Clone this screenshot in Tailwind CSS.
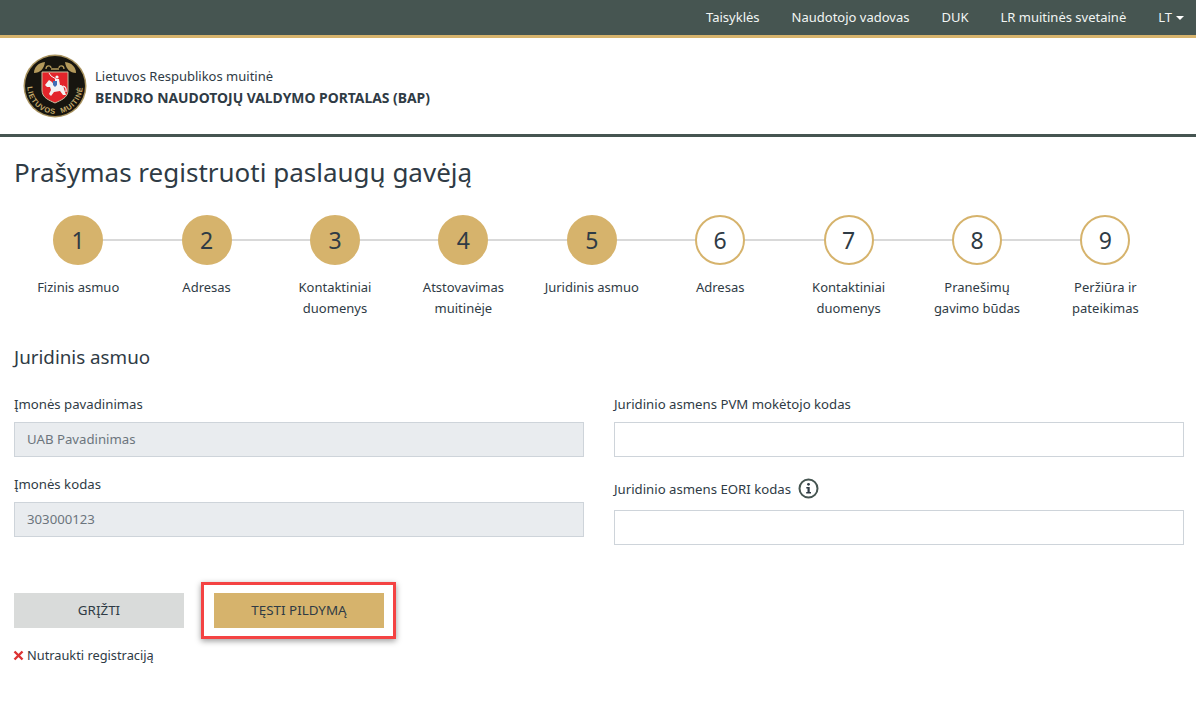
<!DOCTYPE html>
<html>
<head>
  <meta charset="UTF-8" />
  <meta name="viewport" content="width=device-width, initial-scale=1.0" />
  <script src="https://cdn.jsdelivr.net/npm/@tailwindcss/browser@4"></script>
</head>
<body class="bg-white text-[#2f3b45] font-['Noto_Sans','Open_Sans',sans-serif] text-[13px]">
  <nav class="h-[38px] bg-[#465551] border-b-[3px] border-[#d6b36c] flex items-center justify-end text-[#f2f5f4] pr-[12px] gap-[32px]">
    <a>Taisyklės</a>
    <a>Naudotojo vadovas</a>
    <a>DUK</a>
    <a>LR muitinės svetainė</a>
    <a class="flex items-center gap-[4px]">LT <span class="w-0 h-0 border-x-[4px] border-x-transparent border-t-[4px] border-t-white"></span></a>
  </nav>

  <header class="h-[99px] border-b-[3px] border-[#465551] flex items-center pl-[23px] gap-[8px]">
    <svg class="w-[64px] h-[64px] shrink-0" viewBox="0 0 64 64">
      <circle cx="32" cy="32" r="31.5" fill="#a9935f" />
      <circle cx="32" cy="32" r="30" fill="#17150f" />
      <path d="M22 8 C15 9 11 13 11 19 C17 19 21 15 22 8Z" fill="#b49a5c" />
      <path d="M42 8 C49 9 53 13 53 19 C47 19 43 15 42 8Z" fill="#b49a5c" />
      <path d="M23 15 C23 11 28 11 28 14 M41 15 C41 11 36 11 36 14 M28 15 H36" fill="none" stroke="#b49a5c" stroke-width="1.3" />
      <path d="M19 18 H45 V36 C45 44 38 46 32 49 C26 46 19 44 19 36Z" fill="#e3252b" stroke="#c9c0a0" stroke-width="1" />
      <path d="M22 31 L26 26 L29 28 L31 31 L38 31 Q41 32 41 35 L43 41 L40 41 L37 37 L31 38 L28 42 L26 40 L28 36 L27 33 L24 33Z" fill="#f3f3f3" />
      <path d="M40 32 Q44 33 43 38" fill="none" stroke="#f3f3f3" stroke-width="1.2" />
      <circle cx="34" cy="23" r="1.6" fill="#f3f3f3" />
      <path d="M32 25 H36 L37 31 H32Z" fill="#f3f3f3" />
      <path d="M33 25 L28 22 L26 19" fill="none" stroke="#f3f3f3" stroke-width="1" />
      <path d="M30 27 H34 V31 L32 33 L30 31Z" fill="#3f6fb5" />
      <defs>
        <path id="logoArc" d="M5.5 24 A27.7 27.7 0 1 0 58.5 24" />
      </defs>
      <text class="font-['Liberation_Sans',sans-serif] tracking-[0.8px] [word-spacing:3px]" font-size="7.4" font-weight="700" fill="#c5ab6b"><textPath href="#logoArc" startOffset="50%" text-anchor="middle">LIETUVOS MUITINĖ</textPath></text>
    </svg>
    <div class="leading-[21px] pt-px">
      <div>Lietuvos Respublikos muitinė</div>
      <div class="font-bold text-[13.9px]">BENDRO NAUDOTOJŲ VALDYMO PORTALAS (BAP)</div>
    </div>
  </header>

  <main class="px-[14px]">
    <h1 class="text-[26px] leading-[36px] mt-[17px]">Prašymas registruoti paslaugų gavėją</h1>

    <ol class="w-[1155.6px] grid grid-cols-9 mt-[25px] text-center leading-[21px]">
      <li class="relative">
        <div class="absolute left-1/2 top-[24px] w-full h-[2px] bg-[#d9d9d9]"></div>
        <div class="relative mx-auto w-[50px] h-[50px] rounded-full bg-[#d6b36c] border-2 border-[#d6b36c] flex items-center justify-center text-[23px]">1</div>
        <div class="mt-[12px]">Fizinis asmuo</div>
      </li>
      <li class="relative">
        <div class="absolute left-1/2 top-[24px] w-full h-[2px] bg-[#d9d9d9]"></div>
        <div class="relative mx-auto w-[50px] h-[50px] rounded-full bg-[#d6b36c] border-2 border-[#d6b36c] flex items-center justify-center text-[23px]">2</div>
        <div class="mt-[12px]">Adresas</div>
      </li>
      <li class="relative">
        <div class="absolute left-1/2 top-[24px] w-full h-[2px] bg-[#d9d9d9]"></div>
        <div class="relative mx-auto w-[50px] h-[50px] rounded-full bg-[#d6b36c] border-2 border-[#d6b36c] flex items-center justify-center text-[23px]">3</div>
        <div class="mt-[12px]">Kontaktiniai<br />duomenys</div>
      </li>
      <li class="relative">
        <div class="absolute left-1/2 top-[24px] w-full h-[2px] bg-[#d9d9d9]"></div>
        <div class="relative mx-auto w-[50px] h-[50px] rounded-full bg-[#d6b36c] border-2 border-[#d6b36c] flex items-center justify-center text-[23px]">4</div>
        <div class="mt-[12px]">Atstovavimas<br />muitinėje</div>
      </li>
      <li class="relative">
        <div class="absolute left-1/2 top-[24px] w-full h-[2px] bg-[#d9d9d9]"></div>
        <div class="relative mx-auto w-[50px] h-[50px] rounded-full bg-[#d6b36c] border-2 border-[#d6b36c] flex items-center justify-center text-[23px]">5</div>
        <div class="mt-[12px]">Juridinis asmuo</div>
      </li>
      <li class="relative">
        <div class="absolute left-1/2 top-[24px] w-full h-[2px] bg-[#d9d9d9]"></div>
        <div class="relative mx-auto w-[50px] h-[50px] rounded-full bg-white border-2 border-[#d6b36c] flex items-center justify-center text-[23px]">6</div>
        <div class="mt-[12px]">Adresas</div>
      </li>
      <li class="relative">
        <div class="absolute left-1/2 top-[24px] w-full h-[2px] bg-[#d9d9d9]"></div>
        <div class="relative mx-auto w-[50px] h-[50px] rounded-full bg-white border-2 border-[#d6b36c] flex items-center justify-center text-[23px]">7</div>
        <div class="mt-[12px]">Kontaktiniai<br />duomenys</div>
      </li>
      <li class="relative">
        <div class="absolute left-1/2 top-[24px] w-full h-[2px] bg-[#d9d9d9]"></div>
        <div class="relative mx-auto w-[50px] h-[50px] rounded-full bg-white border-2 border-[#d6b36c] flex items-center justify-center text-[23px]">8</div>
        <div class="mt-[12px]">Pranešimų<br />gavimo būdas</div>
      </li>
      <li class="relative">
        <div class="relative mx-auto w-[50px] h-[50px] rounded-full bg-white border-2 border-[#d6b36c] flex items-center justify-center text-[23px]">9</div>
        <div class="mt-[12px]">Peržiūra ir<br />pateikimas</div>
      </li>
    </ol>

    <h2 class="text-[18.8px] leading-[26px] mt-[25px]">Juridinis asmuo</h2>

    <div class="grid grid-cols-2 gap-x-[30px] w-[1170px] mt-[24px] text-[13.2px]">
      <div>
        <label class="block leading-[20px]">Įmonės pavadinimas</label>
        <div class="mt-[8px] h-[35px] bg-[#e9ecef] border border-[#ced4da] flex items-center px-[12px] pt-px text-[#6c757d]">UAB Pavadinimas</div>
        <label class="block leading-[20px] mt-[17px]">Įmonės kodas</label>
        <div class="mt-[8px] h-[35px] bg-[#e9ecef] border border-[#ced4da] flex items-center px-[12px] pt-px text-[#6c757d]">303000123</div>
      </div>
      <div>
        <label class="block leading-[20px]">Juridinio asmens PVM mokėtojo kodas</label>
        <input class="block w-full mt-[8px] h-[35px] border border-[#ced4da] bg-white" />
        <label class="flex items-center gap-[7px] leading-[20px] mt-[21px]">Juridinio asmens EORI kodas
          <svg class="w-[21px] h-[21px]" viewBox="0 0 21 21">
            <circle cx="10.5" cy="10.5" r="9" fill="none" stroke="#465551" stroke-width="2" />
            <circle cx="10.5" cy="6.3" r="1.4" fill="#2f3b45" />
            <path d="M8.3 9 H11.7 V14 H13 V15.6 H8.2 V14 H9.5 V10.6 H8.3Z" fill="#2f3b45" />
          </svg>
        </label>
        <input class="block w-full mt-[11px] h-[35px] border border-[#ced4da] bg-white" />
      </div>
    </div>

    <div class="flex items-center gap-[30px] mt-[48px]">
      <button class="w-[170px] h-[35px] bg-[#d9dbda] text-[13.4px]">GRĮŽTI</button>
      <div class="relative">
        <button class="block w-[170px] h-[35px] bg-[#d6b36c] text-[13.4px]">TĘSTI PILDYMĄ</button>
        <div class="absolute -left-[13px] -top-[11px] w-[195px] h-[57px] border-[3px] border-[#f44343] shadow-[0_2px_6px_rgba(0,0,0,0.4)]"></div>
      </div>
    </div>

    <a class="flex items-center gap-[3px] mt-[17px] leading-[20px] -ml-[1px] text-[12.8px]">
      <svg class="w-[11px] h-[11px]" viewBox="0 0 11 11"><path d="M1.5 1.5 L9.5 9.5 M9.5 1.5 L1.5 9.5" stroke="#dc3232" stroke-width="2.4" /></svg>
      Nutraukti registraciją
    </a>
  </main>
</body>
</html>
